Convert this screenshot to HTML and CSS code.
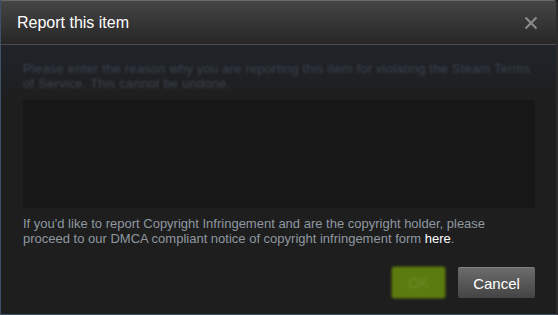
FILE: index.html
```html
<!DOCTYPE html>
<html lang="en">
<head>
    <meta charset="UTF-8">
    <title>Report this item</title>
    <link rel="stylesheet" href="styles.css">
</head>
<body>
    <div class="dialog">
        <div class="header">
            <div class="title">Report this item</div>
            <div class="close">
                <svg width="14" height="14" viewBox="0 0 14 14"><path d="M1.5 1.5 L12.5 12.5 M12.5 1.5 L1.5 12.5" stroke="#8a8a8a" stroke-width="2.2" fill="none"/></svg>
            </div>
        </div>
        <div class="content">
            <p class="intro">Please enter the reason why you are reporting this item for violating the Steam Terms of Service. This cannot be undone.</p>
            <div class="reason"></div>
            <p class="dmca">If you'd like to report Copyright Infringement and are the copyright holder, please proceed to our DMCA compliant notice of copyright infringement form <a href="#">here</a>.</p>
            <div class="buttons">
                <button class="btn ok">OK</button>
                <button class="btn cancel">Cancel</button>
            </div>
        </div>
    </div>
</body>
</html>
```

FILE: styles.css
```css
*{
    margin: 0;
    padding: 0;
    box-sizing: border-box;
}
body{
    background: #1e1e1e;
    font-family: Arial, "Liberation Sans", sans-serif;
}
.dialog{
    width: 558px;
    height: 315px;
    border-left: 1px solid #3d5167;
    border-bottom: 1px solid #3d5167;
    border-right: 2px solid #2b2b2b;
    border-top-right-radius: 4px;
    background: linear-gradient(to bottom, #232a34 0px, #1f2227 60px, #1e1e1e 100px);
    overflow: hidden;
}
.header{
    height: 45px;
    display: flex;
    align-items: center;
    justify-content: space-between;
    padding: 0 18px 0 16px;
    background: linear-gradient(to bottom, #464545 0%, #262626 100%);
    border-top: 1px solid #6a6868;
    border-bottom: 1px solid #4d4b4b;
}
.title{
    color: #fff;
    font-size: 16px;
    margin-top: 1px;
}
.close{
    display: flex;
    margin-top: 1px;
}
.content{
    padding: 16px 21px 0 22px;
}
.intro{
    color: #3c4550;
    font-size: 13px;
    letter-spacing: 0.2px;
    line-height: 15px;
    padding-right: 3px;
    filter: blur(1.3px);
}
.reason{
    height: 108px;
    margin-top: 9px;
    background: #171717;
    border-radius: 2px;
}
.dmca{
    margin-top: 8px;
    color: #8f98a0;
    font-size: 13px;
    line-height: 15px;
}
.dmca a{
    color: #fff;
    text-decoration: none;
}
.buttons{
    display: flex;
    justify-content: flex-end;
    gap: 13px;
    margin-top: 21px;
}
.btn{
    height: 31px;
    border: none;
    border-radius: 2px;
    font-family: Arial, "Liberation Sans", sans-serif;
    font-size: 15px;
}
.ok{
    width: 53px;
    background: #5b7a0f;
    color: #6c8f28;
    filter: blur(1.1px);
    box-shadow: 0 0 3px #4f6a10;
}
.cancel{
    width: 77px;
    color: #fff;
    background: linear-gradient(to bottom, #6b6b6b 0%, #444 100%);
    border-top: 1px solid #808080;
}
```
